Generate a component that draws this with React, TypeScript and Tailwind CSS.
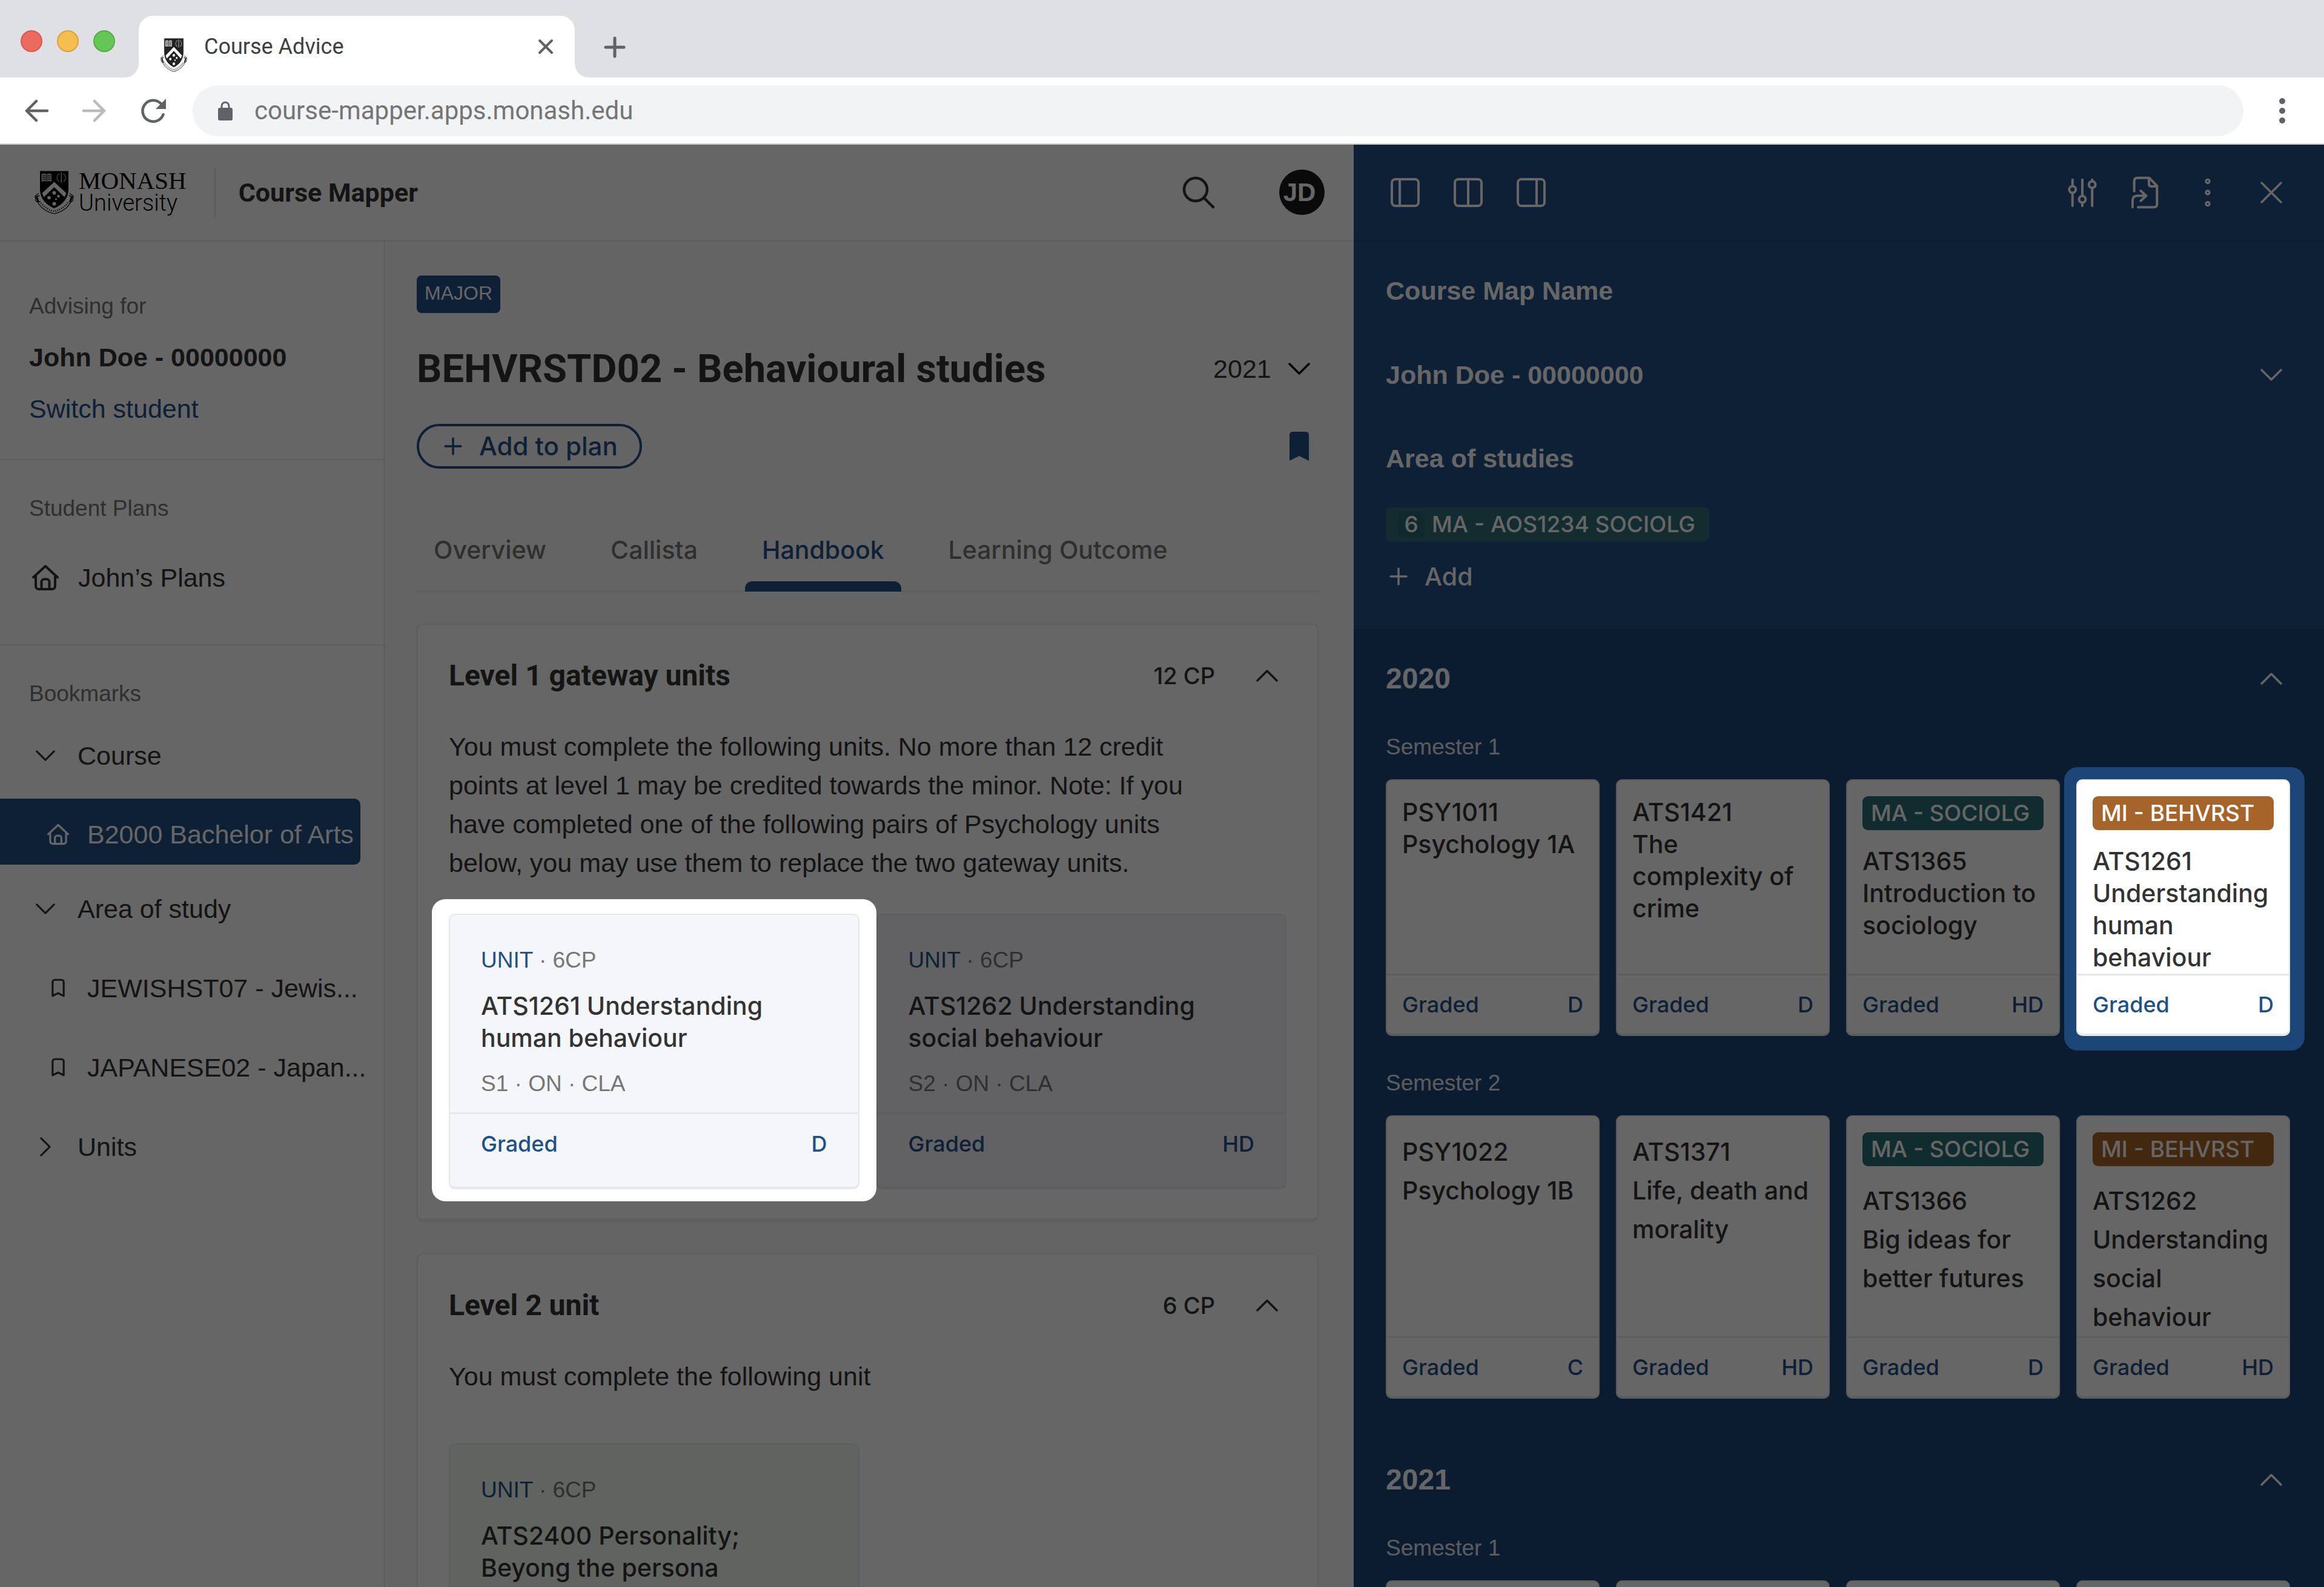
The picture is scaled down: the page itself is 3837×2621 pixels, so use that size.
import React from "react";

type IconProps = { className?: string };

const SANS = "font-['Liberation_Sans',Arial,sans-serif]";
const MEDIUM = "font-['Inter',sans-serif] font-medium";
const HEADING = "font-['Roboto',sans-serif] font-bold";

function Crest({ className = "" }: IconProps) {
  return (
    <svg viewBox="0 0 65 72" preserveAspectRatio="none" className={className} aria-hidden="true">
      <path
        d="M7 37.5 1 41.5 2 50 5.5 52C10 61 20 68 32.5 71 45 68 55 61 59.5 52L63 50 64 41.5 58 37.5"
        fill="#fff"
        stroke="currentColor"
        strokeWidth="1.2"
        strokeLinejoin="round"
      />
      <path d="M5.5 52 2.5 43l5.5-2M59.5 52 62.5 43l-5.5-2" fill="none" stroke="currentColor" strokeWidth="1.5" />
      <path d="M4 43l3 9M61 43l-3 9" fill="none" stroke="currentColor" strokeWidth="2" />
      <path
        d="M8.5 50.5c5.5 8.5 14 14 24 16.5 10-2.5 18.5-8 24-16.5"
        fill="none"
        stroke="currentColor"
        strokeWidth="2.6"
        strokeDasharray="1.3 2.2"
      />
      <path d="M8.5 0h48v30c0 15-9 26-24 32.5C17.5 56 8.5 45 8.5 30Z" fill="currentColor" stroke="#fff" strokeWidth="1" />
      <path d="M12.5 37 32.5 18.5l20 18.5-3 6.5L32.5 27l-17 16.5Z" fill="#fff" />
      <circle cx="32.5" cy="36.5" r="3" fill="#fff" />
      <circle cx="24" cy="44.5" r="2.8" fill="#fff" />
      <circle cx="39.5" cy="42" r="2.2" fill="#fff" />
      <circle cx="35.5" cy="47" r="1.6" fill="#fff" />
      <circle cx="32.5" cy="54.5" r="3" fill="#fff" />
      <path d="M11.5 5.5c3-1.5 6-1.5 8.5 0 2.5-1.5 5.5-1.5 8 0V18c-2.5-1-5.5-1-8 0-2.5-1-5.5-1-8.5 0Z" fill="#bbb" />
      <path d="M13.5 8h5M13.5 11h5M13.5 14h5M21.5 8h5M21.5 11h5M21.5 14h5M20 5v13" stroke="currentColor" strokeWidth="1" />
      <path d="M41 5c-5 3-5 10 0 13M47.5 5c5 3 5 10 0 13" fill="none" stroke="#aaa" strokeWidth="2" strokeDasharray="1.8 0.8" />
      <path d="M44.25 3v17" stroke="#bbb" strokeWidth="1.5" />
    </svg>
  );
}

function Chevron({ dir = "down", className = "" }: IconProps & { dir?: "down" | "up" | "right" }) {
  const d = dir === "down" ? "M2 10 18 26 34 10" : dir === "up" ? "M2 26 18 10 34 26" : "M10 2 26 18 10 34";
  return (
    <svg viewBox="0 0 36 36" className={`shrink-0 ${className}`} fill="none" stroke="currentColor" strokeWidth="3.5" strokeLinecap="round" strokeLinejoin="round" aria-hidden="true">
      <path d={d} />
    </svg>
  );
}

function Home({ className = "" }: IconProps) {
  return (
    <svg viewBox="0 0 44 44" className={`shrink-0 ${className}`} fill="none" stroke="currentColor" strokeWidth="4" strokeLinecap="round" strokeLinejoin="round" aria-hidden="true">
      <path d="M2 21.5 22 3l20 18.5" />
      <path d="M6 18.5V36a5 5 0 0 0 5 5h22a5 5 0 0 0 5-5V18.5" />
      <path d="M15.5 41V29a4.5 4.5 0 0 1 4.5-4.5h4a4.5 4.5 0 0 1 4.5 4.5v12" />
    </svg>
  );
}

function BookmarkOutline({ className = "" }: IconProps) {
  return (
    <svg viewBox="0 0 24 34" className={`shrink-0 ${className}`} fill="none" stroke="currentColor" strokeWidth="3.5" strokeLinejoin="round" aria-hidden="true">
      <path d="M2 31V6a4 4 0 0 1 4-4h12a4 4 0 0 1 4 4v25l-10-5Z" />
    </svg>
  );
}

function Plus({ className = "" }: IconProps) {
  return (
    <svg viewBox="0 0 30 30" className={`shrink-0 ${className}`} fill="none" stroke="currentColor" strokeWidth="3.5" strokeLinecap="round" aria-hidden="true">
      <path d="M15 2v26M2 15h26" />
    </svg>
  );
}

function PanelIcon({ split }: { split: number }) {
  return (
    <svg viewBox="0 0 48 48" className="size-12" fill="none" stroke="currentColor" strokeWidth="4" aria-hidden="true">
      <rect x="2" y="2" width="44" height="44" rx="6" />
      <path d={`M${split} 2v44`} />
    </svg>
  );
}

function BrowserChrome() {
  return (
    <header className="shrink-0 font-['Roboto',sans-serif]">
      <div className="flex h-32 items-end bg-[#dee0e4]">
        <div className="flex h-[120px] w-[229px] shrink-0 items-center gap-6 pl-[34px]">
          <button aria-label="Close window" className="size-9 rounded-full border-2 border-[#d9584e] bg-[#ed6a5f]" />
          <button aria-label="Minimise window" className="size-9 rounded-full border-2 border-[#d8a243] bg-[#f5bf50]" />
          <button aria-label="Zoom window" className="size-9 rounded-full border-2 border-[#53ad40] bg-[#63c655]" />
        </div>
        <div className="relative flex h-[102px] w-[720px] items-center rounded-t-[24px] bg-white pr-[34px] pl-9">
          <svg viewBox="0 0 24 24" className="absolute bottom-0 -left-6 size-6" aria-hidden="true">
            <path d="M24 0v24H0C14 24 24 14 24 0Z" fill="#fff" />
          </svg>
          <svg viewBox="0 0 24 24" className="absolute -right-6 bottom-0 size-6" aria-hidden="true">
            <path d="M0 0v24h24C10 24 0 14 0 0Z" fill="#fff" />
          </svg>
          <Crest className="mt-7 h-14 w-11 text-[#222]" />
          <span className="ml-7 flex-1 text-[36px] leading-[42px] text-[#3c4043]">Course Advice</span>
          <button aria-label="Close tab" className="text-[#5f6368]">
            <svg viewBox="0 0 28 28" className="size-7" fill="none" stroke="currentColor" strokeWidth="4" strokeLinecap="round" aria-hidden="true">
              <path d="M4 4l20 20M24 4 4 24" />
            </svg>
          </button>
        </div>
        <button aria-label="New tab" className="mb-8 ml-12 text-[#5f6368]">
          <svg viewBox="0 0 36 36" className="size-9" fill="none" stroke="currentColor" strokeWidth="5" strokeLinecap="round" aria-hidden="true">
            <path d="M18 3v30M3 18h30" />
          </svg>
        </button>
      </div>
      <div className="flex h-[111px] items-center border-b-2 border-[#c4c6c8] bg-white pl-10 text-[#5f6368]">
        <button aria-label="Back">
          <svg viewBox="0 0 40 40" className="size-10" fill="none" stroke="currentColor" strokeWidth="4.5" strokeLinecap="round" strokeLinejoin="round" aria-hidden="true">
            <path d="M38 20H4M20 4 4 20l16 16" />
          </svg>
        </button>
        <button aria-label="Forward" className="ml-14 text-[#bababa]">
          <svg viewBox="0 0 40 40" className="size-10" fill="none" stroke="currentColor" strokeWidth="4.5" strokeLinecap="round" strokeLinejoin="round" aria-hidden="true">
            <path d="M2 20h34M20 4l16 16-16 16" />
          </svg>
        </button>
        <button aria-label="Reload" className="ml-14">
          <svg viewBox="0 0 42 42" className="size-[42px]" fill="none" stroke="currentColor" strokeWidth="4.5" strokeLinecap="round" aria-hidden="true">
            <path d="M37.5 27A17.5 17.5 0 1 1 33 8.5l3 3" />
            <path d="M42 1v17H25Z" fill="currentColor" stroke="none" />
          </svg>
        </button>
        <div className="ml-11 flex h-[84px] flex-1 items-center rounded-full bg-[#f1f3f5] pl-[42px]">
          <svg viewBox="0 0 24 32" className="h-8 w-6 shrink-0" aria-hidden="true">
            <path d="M6 12V8a6 6 0 0 1 12 0v4" fill="none" stroke="currentColor" strokeWidth="3" />
            <rect x="0" y="11" width="24" height="21" rx="3" fill="currentColor" />
          </svg>
          <input aria-label="Address" defaultValue="course-mapper.apps.monash.edu" className="ml-9 min-w-0 flex-1 bg-transparent text-[42px] leading-[60px] text-[#757575] outline-none" />
        </div>
        <button aria-label="Browser menu" className="mr-[49px] ml-[44px]">
          <svg viewBox="0 0 40 44" className="h-11 w-10" fill="currentColor" aria-hidden="true">
            <circle cx="20" cy="6" r="5" />
            <circle cx="20" cy="22" r="5" />
            <circle cx="20" cy="38" r="5" />
          </svg>
        </button>
      </div>
    </header>
  );
}

function AppHeader() {
  return (
    <div className="flex h-[160px] shrink-0 items-center border-b-[3px] border-[#ececec] bg-white pr-12 pl-[57px]">
      <a href="#home" className="flex items-center text-black">
        <Crest className="h-[72px] w-[65px]" />
        <span className="ml-2 block pb-1">
          <span className="block font-['Liberation_Serif',serif] text-[41px] leading-[38px]">MONASH</span>
          <span className="block font-['Roboto',sans-serif] text-[38px] leading-[36px] font-light">University</span>
        </span>
      </a>
      <div className="ml-[46px] h-[82px] w-0.5 bg-[#e6e6e6]" />
      <h1 className={`ml-[38px] flex-1 text-[43px] leading-[52px] text-[#333] ${HEADING}`}>Course Mapper</h1>
      <button aria-label="Search" className="text-[#333]">
        <svg viewBox="0 0 54 54" className="size-[54px]" fill="none" stroke="currentColor" strokeWidth="4.5" strokeLinecap="round" aria-hidden="true">
          <circle cx="22" cy="22" r="19" />
          <path d="M35.5 35.5 51 51" />
        </svg>
      </button>
      <button className="ml-[106px] flex size-[75px] items-center justify-center rounded-full bg-[#1a1a1a] pr-2 font-['Liberation_Sans',Arial,sans-serif] text-[42px] leading-[42px] font-bold text-white">JD</button>
    </div>
  );
}

const LABEL = "text-[37px] leading-[48px] text-[#777]";

function NavRow({ icon, label, inner = false }: { icon: React.ReactNode; label: string; inner?: boolean }) {
  return (
    <button className={`flex h-[131px] w-full items-center gap-[37px] text-left ${inner ? "pl-[85px]" : "pl-[59px]"}`}>
      {icon}
      <span className="whitespace-nowrap">{label}</span>
    </button>
  );
}

function Sidebar() {
  return (
    <nav className="w-[636px] shrink-0 border-r-[3px] border-[#ececec] bg-white text-[43px] leading-[64px] text-[#333]">
      <section className="border-b-2 border-[#ececec] px-12 pt-[83px] pb-[51px]">
        <p className={LABEL}>Advising for</p>
        <p className="mt-7 font-bold">John Doe - 00000000</p>
        <a href="#switch" className="mt-[21px] block text-[#215085]">Switch student</a>
      </section>
      <section className="border-b-2 border-[#ececec] px-12 pt-14 pb-[78px]">
        <h2 className={LABEL}>Student Plans</h2>
        <a href="#plans" className="mt-[58px] flex items-center gap-8 pl-[5px]">
          <Home className="size-11" />
          John’s Plans
        </a>
      </section>
      <section className="pt-14">
        <h2 className={`px-12 ${LABEL}`}>Bookmarks</h2>
        <div className="pt-3">
          <NavRow icon={<Chevron className="size-8" />} label="Course" />
          <a href="#b2000" className="mt-[6px] mr-[38px] mb-[7px] flex h-[109px] items-center gap-[30px] rounded-r-[10px] bg-[#215085] pt-2 pl-[78px] text-white">
            <Home className="size-9" />
            <span className="whitespace-nowrap">B2000 Bachelor of Arts</span>
          </a>
          <NavRow icon={<Chevron className="size-8" />} label="Area of study" />
          <NavRow inner icon={<BookmarkOutline className="h-[34px] w-[22px]" />} label="JEWISHST07 - Jewis..." />
          <NavRow inner icon={<BookmarkOutline className="h-[34px] w-[22px]" />} label="JAPANESE02 - Japan..." />
          <NavRow icon={<Chevron dir="right" className="size-8" />} label="Units" />
        </div>
      </section>
    </nav>
  );
}

type Unit = { title: string[]; offering?: string; grade?: string; tone?: string; spotlight?: boolean };

function UnitCard({ title, offering, grade, tone = "bg-[#f4f6fa]", spotlight }: Unit) {
  return (
    <article className={spotlight ? "relative z-20" : ""}>
      {spotlight && <div className="absolute -inset-x-7 -top-6 -bottom-5 rounded-[22px] bg-white" />}
      <div className={`rounded-[10px] border-2 border-b-4 border-[#e6e8eb] ${tone} ${spotlight ? "relative" : ""}`}>
        <div className="px-[51px] pt-[51px] pb-[23px]">
          <p className={LABEL}>
            <span className="text-[#215085]">UNIT</span> · 6CP
          </p>
          <h3 className={`mt-[25px] text-[41px] leading-[53px] text-[#333] ${MEDIUM}`}>
            {title.map((line) => (
              <span key={line} className="block">{line}</span>
            ))}
          </h3>
          <p className={`mt-[25px] ${LABEL}`}>{offering}</p>
        </div>
        <div className={`flex justify-between border-t-[3px] border-[#e6e8eb] px-[51px] pt-[25px] pb-[47px] text-[36px] leading-[48px] text-[#215085] ${MEDIUM}`}>
          <span>Graded</span>
          <span>{grade}</span>
        </div>
      </div>
    </article>
  );
}

function LevelCard({ title, points, text, children, gap }: { title: string; points: string; text: string; children: React.ReactNode; gap: string }) {
  return (
    <section className="mr-1 rounded-[10px] border-2 border-b-[6px] border-[#ebebeb] bg-white px-[51px] pt-[52px] pb-12">
      <div className="flex h-16 items-center text-[#333]">
        <h2 className={`flex-1 text-[48px] leading-[64px] ${HEADING}`}>{title}</h2>
        <span className={`text-[38px] leading-[64px] ${MEDIUM}`}>{points}</span>
        <button aria-label={`Collapse ${title}`} className="mr-[14px] ml-[68px]">
          <Chevron dir="up" className="size-9" />
        </button>
      </div>
      <p className="mt-[53px] max-w-[1270px] text-[43px] leading-[64px] text-[#333]">{text}</p>
      <div className={`grid grid-cols-2 gap-7 ${gap}`}>{children}</div>
    </section>
  );
}

function Main() {
  const tabs = ["Overview", "Callista", "Handbook", "Learning Outcome"];
  return (
    <main className="min-w-0 flex-1 bg-[#fbfbfb] pt-[56px] pr-[54px] pl-[52px]">
      <span className="flex h-[62px] w-[138px] items-center justify-center rounded-[8px] bg-[#215085] pb-1 text-[32px] leading-[40px] text-white">MAJOR</span>
      <div className="mt-[52px] flex items-center text-[#333]">
        <h2 className={`flex-1 text-[65px] leading-[80px] ${HEADING}`}>BEHVRSTD02 - Behavioural studies</h2>
        <div className="mr-[18px] flex items-center gap-7">
          <select aria-label="Handbook year" className="appearance-none bg-transparent text-[43px] leading-[64px]">
            <option>2021</option>
          </select>
          <Chevron className="size-9 text-black" />
        </div>
      </div>
      <div className="mt-[51px] flex items-center justify-between text-[#215085]">
        <button className={`flex h-[74px] items-center gap-7 rounded-full border-4 border-[#215085] pr-9 pl-[41px] text-[42px] leading-[60px] ${MEDIUM}`}>
          <Plus className="size-[30px]" />
          Add to plan
        </button>
        <button aria-label="Remove bookmark" className="mr-5">
          <svg viewBox="0 0 32 48" className="h-12 w-8" fill="currentColor" aria-hidden="true">
            <path d="M0 46V5a5 5 0 0 1 5-5h22a5 5 0 0 1 5 5v41c0 2-1 2-2 1l-14-7-14 7c-1 1-2 1-2-1Z" />
          </svg>
        </button>
      </div>
      <div role="tablist" className={`mt-[67px] flex gap-[50px] border-b-[3px] border-[#ececec] text-[41px] leading-[60px] ${MEDIUM}`}>
        {tabs.map((tab) => (
          <button
            key={tab}
            role="tab"
            aria-selected={tab === "Handbook"}
            className={`relative h-[134px] px-7 whitespace-nowrap ${tab === "Handbook" ? "text-[#215085]" : "text-[#777]"}`}
          >
            {tab}
            {tab === "Handbook" && <span className="absolute inset-x-0 -bottom-[2px] h-[17px] rounded-t-[12px] bg-[#215085]" />}
          </button>
        ))}
      </div>
      <div className="mt-[52px] flex flex-col gap-[52px]">
        <LevelCard
          title="Level 1 gateway units"
          points="12 CP"
          gap="mt-[52px]"
          text="You must complete the following units. No more than 12 credit points at level 1 may be credited towards the minor. Note: If you have completed one of the following pairs of Psychology units below, you may use them to replace the two gateway units."
        >
          <UnitCard spotlight title={["ATS1261 Understanding", "human behaviour"]} offering="S1 · ON · CLA" grade="D" />
          <UnitCard title={["ATS1262 Understanding", "social behaviour"]} offering="S2 · ON · CLA" grade="HD" />
        </LevelCard>
        <LevelCard title="Level 2 unit" points="6 CP" gap="mt-[79px]" text="You must complete the following unit">
          <UnitCard tone="bg-[#f3f8f3]" title={["ATS2400 Personality;", "Beyong the persona"]} />
        </LevelCard>
      </div>
    </main>
  );
}

type Course = { title: string[]; grade: string; tag?: "MA - SOCIOLG" | "MI - BEHVRST"; spotlight?: boolean };

function CourseTile({ course, roomy }: { course: Course; roomy: boolean }) {
  const tagTone = course.tag === "MI - BEHVRST" ? "bg-[#a7642a]" : "bg-[#2c6f74]";
  return (
    <article className={`flex flex-col ${course.spotlight ? "relative z-20" : ""}`}>
      {course.spotlight && <div className="absolute -top-5 -right-6 -bottom-6 -left-5 rounded-[22px] bg-[#1c4678]" />}
      <div className={`flex flex-1 flex-col rounded-[10px] border-x-2 border-t-2 border-b-4 border-[#e6e8eb] bg-white ${MEDIUM} ${course.spotlight ? "relative" : ""}`}>
        <div className="flex-1 px-[25px] pt-[26px]">
          {course.tag && (
            <div className={`mb-[25px] flex h-14 items-center rounded-[9px] pl-3.5 text-[37px] leading-[48px] whitespace-nowrap text-white ${tagTone}`}>{course.tag}</div>
          )}
          <h4 className={`text-[41px] text-[#333] ${roomy ? "leading-[64px]" : "leading-[53px]"}`}>
            {course.title.map((line) => (
              <span key={line} className="block whitespace-nowrap">{line}</span>
            ))}
          </h4>
        </div>
        <div className="flex h-[99px] items-center justify-between border-t-[3px] border-[#e6e8eb] px-[25px] text-[36px] leading-[48px] text-[#215085]">
          <span>Graded</span>
          <span>{course.grade}</span>
        </div>
      </div>
    </article>
  );
}

const FIRST: Course[] = [
  { title: ["PSY1011", "Psychology 1A"], grade: "D" },
  { title: ["ATS1421", "The", "complexity of", "crime"], grade: "D" },
  { title: ["ATS1365", "Introduction to", "sociology"], grade: "HD", tag: "MA - SOCIOLG" },
  { title: ["ATS1261", "Understanding", "human", "behaviour"], grade: "D", tag: "MI - BEHVRST", spotlight: true },
];

const SECOND: Course[] = [
  { title: ["PSY1022", "Psychology 1B"], grade: "C" },
  { title: ["ATS1371", "Life, death and", "morality"], grade: "HD" },
  { title: ["ATS1366", "Big ideas for", "better futures"], grade: "D", tag: "MA - SOCIOLG" },
  { title: ["ATS1262", "Understanding", "social", "behaviour"], grade: "HD", tag: "MI - BEHVRST" },
];

const EMPTY: Course[] = [1, 2, 3, 4].map(() => ({ title: [], grade: "" }));

function Semester({ name, courses, roomy = false, className }: { name: string; courses: Course[]; roomy?: boolean; className: string }) {
  return (
    <section className={className}>
      <h3 className="text-[37px] leading-[48px] text-[#e4e7ea]">{name}</h3>
      <div className="mt-[29px] grid grid-cols-4 gap-[27px]">
        {courses.map((course, i) => (
          <CourseTile key={i} course={course} roomy={roomy} />
        ))}
      </div>
    </section>
  );
}

function YearHeader({ year }: { year: string }) {
  return (
    <button aria-expanded="true" className="flex w-full items-center justify-between pr-[13px] text-[48px] leading-[64px] font-bold">
      {year}
      <Chevron dir="up" className="size-9" />
    </button>
  );
}

function CourseMap() {
  return (
    <aside className="w-[41.75%] shrink-0 bg-[#1c4678] text-white">
      <div className="bg-[#235084]">
        <div className="flex h-[160px] items-center border-b-2 border-[#1e4a7c] pr-[69px] pl-[61px]">
          <div className="flex flex-1 gap-14">
            <button aria-label="Dock left"><PanelIcon split={15} /></button>
            <button aria-label="Split evenly"><PanelIcon split={24} /></button>
            <button aria-label="Dock right"><PanelIcon split={33} /></button>
          </div>
          <button aria-label="Filters">
            <svg viewBox="102 105 142 142" className="size-12" fill="none" stroke="currentColor" strokeWidth="12" strokeLinecap="round" aria-hidden="true">
              <path d="M125 113v31M125 177v64M173 113v80M173 225v16M221 113v8M221 153v88" />
              <circle cx="125" cy="161" r="16" />
              <circle cx="173" cy="209" r="16" />
              <circle cx="221" cy="137" r="16" />
            </svg>
          </button>
          <button aria-label="Export" className="ml-14">
            <svg viewBox="412 96 138 162" className="h-[54px] w-[46px]" fill="none" stroke="currentColor" strokeWidth="12" strokeLinecap="round" strokeLinejoin="round" aria-hidden="true">
              <path d="M429 170v-50q0-16 16-16h58l39 40v90q0 16-16 16h-78" />
              <path d="M502 106v30q0 10 10 10h29" />
              <path d="M421 250v-33q0-24 24-24h42M461 168l27 25-27 25" />
            </svg>
          </button>
          <button aria-label="More options" className="ml-[71px]">
            <svg viewBox="767 102 60 150" className="h-[50px] w-5" fill="none" stroke="currentColor" strokeWidth="10" aria-hidden="true">
              <circle cx="797" cy="121" r="9" />
              <circle cx="797" cy="177" r="9" />
              <circle cx="797" cy="233" r="9" />
            </svg>
          </button>
          <button aria-label="Close course map" className="ml-[77px]">
            <svg viewBox="0 0 36 36" className="size-9" fill="none" stroke="currentColor" strokeWidth="3.5" strokeLinecap="round" aria-hidden="true">
              <path d="M2 2l32 32M34 2 2 34" />
            </svg>
          </button>
        </div>
        <div className="pt-[49px] pr-[56px] pb-[55px] pl-[53px] text-[43px] leading-[64px] font-bold">
          <h2>Course Map Name</h2>
          <button aria-expanded="false" className="mt-[75px] flex w-full items-center justify-between pr-[13px]">
            John Doe - 00000000
            <Chevron className="size-9" />
          </button>
          <h2 className="mt-[74px]">Area of studies</h2>
          <div className={`mt-[49px] flex h-14 w-[534px] items-center gap-3 rounded-[8px] bg-[#2d6e76] pl-5 text-[37px] leading-[48px] ${MEDIUM}`}>
            <span className="flex h-11 w-[44px] items-center justify-center rounded-[8px] bg-[#28656c]">6</span>
            <span className="whitespace-nowrap">MA - AOS1234 SOCIOLG</span>
          </div>
          <button className={`mt-[26px] flex items-center gap-7 pl-[6px] text-[41px] leading-[64px] ${MEDIUM}`}>
            <Plus className="size-[30px]" />
            Add
          </button>
        </div>
      </div>
      <div className="pr-[56px] pl-[53px]">
        <section className="pt-[50px]">
          <YearHeader year="2020" />
          <Semester className="mt-[57px]" name="Semester 1" courses={FIRST} />
          <Semester className="mt-[54px]" name="Semester 2" courses={SECOND} roomy />
        </section>
        <section className="pt-[102px]">
          <YearHeader year="2021" />
          <Semester className="mt-[57px]" name="Semester 1" courses={EMPTY} />
        </section>
      </div>
    </aside>
  );
}

export default function App() {
  return (
    <div className={`flex h-screen flex-col overflow-hidden ${SANS}`}>
      <BrowserChrome />
      <div className="relative flex min-h-0 flex-1 overflow-hidden">
        <div className="flex min-w-0 flex-1 flex-col">
          <AppHeader />
          <div className="flex flex-1">
            <Sidebar />
            <Main />
          </div>
        </div>
        <CourseMap />
        <div className="pointer-events-none absolute inset-0 z-10 bg-black/60" />
      </div>
    </div>
  );
}
